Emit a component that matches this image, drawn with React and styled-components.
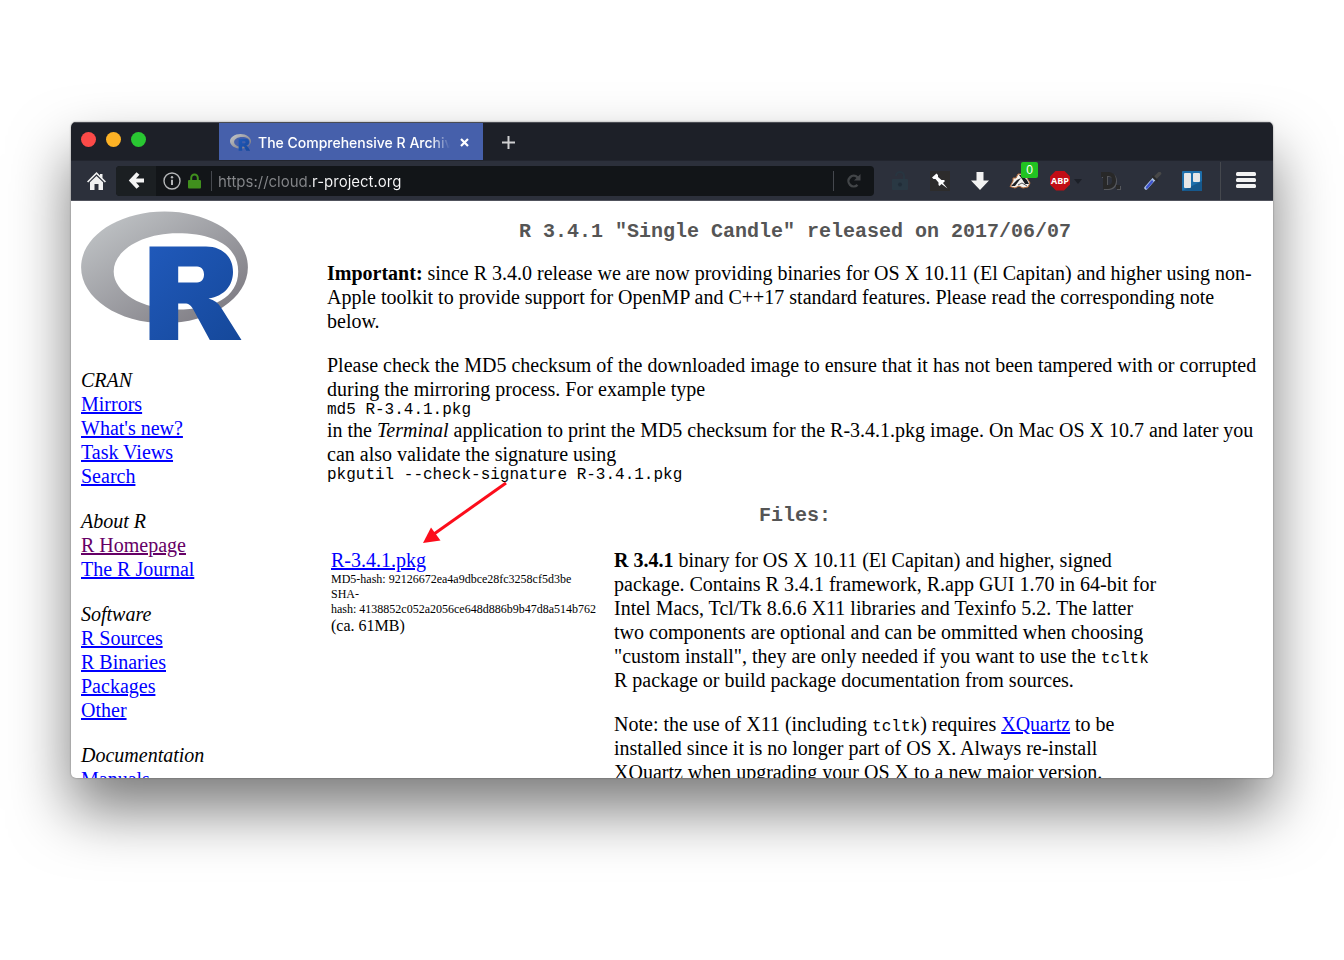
import React from 'react';
import styled, { createGlobalStyle } from 'styled-components';

const GlobalStyle = createGlobalStyle`
  * { box-sizing: border-box; }
  body {
    margin: 0;
    background: #fff;
    color: #000;
    font-family: 'Liberation Serif', serif;
    font-size: 20px;
    line-height: 24px;
  }
`;

const Desktop = styled.div`
  height: 100vh;
  padding: 122px 71px 182px;
  display: flex;
`;

const BrowserWindow = styled.div`
  flex: 1;
  min-width: 0;
  display: flex;
  flex-direction: column;
  overflow: hidden;
  background: #fff;
  border-radius: 5px;
  box-shadow: 0 32px 60px rgba(0, 0, 0, 0.52), 0 0 2px rgba(0, 0, 0, 0.4);
`;

const TitleBar = styled.header`
  flex: none;
  display: flex;
  height: 38px;
  background: #1d2028;
  border-top: 1px solid #4a4c53;
  font-family: Inter, sans-serif;
`;

const WindowButtons = styled.div`
  display: flex;
  gap: 10px;
  width: 148px;
  padding: 9px 10px;
`;

const WindowButton = styled.button`
  width: 15px;
  height: 15px;
  padding: 0;
  border: 0;
  border-radius: 50%;
  background: ${(p) => p.$color};
`;

const Tab = styled.div`
  display: flex;
  align-items: center;
  gap: 7px;
  width: 264px;
  padding: 2px 12px 0 11px;
  background: #4660ab;
  color: #fff;
`;

const TabTitle = styled.span`
  flex: 1;
  min-width: 0;
  overflow: hidden;
  white-space: nowrap;
  font-size: 14px;
  font-weight: 500;
  mask-image: linear-gradient(90deg, #000 90%, transparent);
`;

const IconButton = styled.button`
  flex: none;
  display: flex;
  align-items: center;
  justify-content: center;
  position: relative;
  width: ${(p) => p.$width || 40}px;
  height: ${(p) => p.$height || 40}px;
  padding: 0;
  border: 0;
  background: none;
`;

const Toolbar = styled.nav`
  flex: none;
  display: flex;
  align-items: center;
  height: 41px;
  padding: 0 2px 0 5px;
  background: #2c303b;
  border-top: 1px solid #22252e;
  border-bottom: 1px solid #50525c;
  font-family: Inter, sans-serif;
`;

const AddressBar = styled.form`
  flex: 1;
  min-width: 0;
  display: flex;
  align-items: center;
  height: 30px;
  margin-right: 6px;
  overflow: hidden;
  border-radius: 4px;
  background: #121518;
`;

const BackButton = styled(IconButton)`
  background: #1b1f22;
`;

const SiteInfo = styled.div`
  display: flex;
  align-items: center;
  gap: 7px;
  padding: 0 10px 0 7px;
`;

const Divider = styled.span`
  width: 1px;
  height: ${(p) => p.$height || 20}px;
  background: #45484e;
`;

const Address = styled.input`
  flex: 1;
  min-width: 0;
  height: 26px;
  margin-left: 6px;
  padding: 2px 0 0;
  border: 0;
  outline: 0;
  font-family: Inter, sans-serif;
  font-size: 15px;
  color: transparent;
  caret-color: #fff;
  background: linear-gradient(90deg, #85878a 94px, #f9f9fa 94px);
  background-clip: text;
`;

const Badge = styled.span`
  position: absolute;
  top: 1px;
  right: 2px;
  width: 17px;
  height: 16px;
  border-radius: 2px;
  background: #22c322;
  color: #fff;
  font-size: 12px;
  font-weight: 500;
  line-height: 16px;
  text-align: center;
`;

const Page = styled.div`
  flex: 1;
  min-height: 0;
  display: flex;
  overflow: hidden;
  padding: 0 10px;
`;

const Sidebar = styled.nav`
  flex: none;
  width: 246px;
  padding-top: 10px;
`;

const LogoLink = styled.a`
  display: block;
  margin-bottom: 27px;
  svg { display: block; }
`;

const LinkGroup = styled.section`
  margin-bottom: 21px;
`;

const GroupTitle = styled.em`
  display: block;
`;

const LinkList = styled.ul`
  margin: 0;
  padding: 0;
  list-style: none;
`;

const Link = styled.a`
  color: ${(p) => (p.$visited ? '#660066' : '#0000ff')};
  text-decoration: underline;
`;

const Main = styled.main`
  flex: 1;
  min-width: 0;
`;

const Heading = styled.h1`
  margin: 19px 0 17px;
  color: #555;
  font-family: 'Liberation Mono', monospace;
  font-size: 20px;
  line-height: 24px;
  text-align: center;
`;

const FilesHeading = styled(Heading)`
  margin: 21px 0 20px;
`;

const Paragraph = styled.p`
  margin: 0 0 20px;
`;

const Command = styled.code`
  display: block;
  padding-top: 2px;
  font-family: 'Liberation Mono', monospace;
  font-size: 16px;
  line-height: 15px;
`;

const Code = styled.code`
  font-family: 'Liberation Mono', monospace;
  font-size: 16px;
  line-height: 16px;
`;

const FilesTable = styled.table`
  width: 838px;
  max-width: 100%;
  table-layout: fixed;
  border-spacing: 0;
  td { padding: 0 0 0 4px; vertical-align: top; }
  td:first-child { width: 283px; }
`;

const Hash = styled.div`
  font-size: 12px;
  line-height: 15px;
  white-space: nowrap;
`;

const FileSize = styled.div`
  font-size: 16px;
  line-height: 18px;
`;

const ArrowAnchor = styled.div`
  position: relative;
`;

const Arrow = styled.svg`
  position: absolute;
  top: -2px;
  left: 96px;
`;

const groups = [
  { title: 'CRAN', links: ['Mirrors', "What's new?", 'Task Views', 'Search'] },
  { title: 'About R', links: ['R Homepage', 'The R Journal'] },
  { title: 'Software', links: ['R Sources', 'R Binaries', 'Packages', 'Other'] },
  { title: 'Documentation', links: ['Manuals'] },
];

function RLogo({ width, height, id }) {
  return (
    <svg width={width} height={height} viewBox="0 0 167 130" preserveAspectRatio="none" aria-label="R">
      <defs>
        <linearGradient id={`${id}-ring`} x1="0" y1="0" x2="1" y2="1">
          <stop offset="0" stopColor="#c6cacc" />
          <stop offset="1" stopColor="#76737b" />
        </linearGradient>
        <linearGradient id={`${id}-letter`} x1="0" y1="0" x2="1" y2="1">
          <stop offset="0" stopColor="#2059ba" />
          <stop offset="1" stopColor="#15489a" />
        </linearGradient>
      </defs>
      <path
        fill={`url(#${id}-ring)`}
        fillRule="evenodd"
        d="M83.500 .5C37.400 .5 .1 25.500 .1 56.300c0 30.900 37.300 55.900 83.400 55.900s83.400-25 83.400-55.900C166.900 25.500 129.600 .5 83.500 .5ZM96.200 22.300c35.100 0 61 11.700 61 38.100s-25.900 38.100-61 38.100-63.500-17.100-63.500-38.100 28.500-38.100 63.500-38.100Z"
      />
      <path
        fill={`url(#${id}-letter)`}
        fillRule="evenodd"
        d="M68.500 35.500h56.500c15 0 27 9 27 25.500 0 13-8 24-24.500 26.500 6 1.500 10 4.500 12.500 9L160.500 129h-31.700L112 98c-2-3.500-4-5.500-8.500-5.500H97.200V129H68.500ZM97.200 55.500V71.500H116c5 0 7-4 7-8s-2-8-7-8Z"
      />
    </svg>
  );
}

const HomeIcon = () => (
  <svg width="19" height="18" viewBox="0 0 19 18" fill="#f0f0f0">
    <path d="M9.500 0 13 3.500V2h2.500v4L19 9.500 17.800 10.500 9.500 2.300 1.200 10.500 0 9.500Z" />
    <path d="M3 10.200 9.500 3.900 16 10.200V18h-4.500v-6h-4v6H3Z" />
  </svg>
);

const BackIcon = () => (
  <svg width="17" height="17" viewBox="0 0 17 17" fill="none" stroke="#f4f4f4" strokeWidth="4">
    <path d="M10 1.500 3.500 8.500 10 15.500M4 8.500h12" />
  </svg>
);

const InfoIcon = () => (
  <svg width="18" height="18" viewBox="0 0 18 18" fill="none" stroke="#b4b6b8" strokeWidth="1.400">
    <circle cx="9" cy="9" r="8" />
    <path d="M9 7.700V13" strokeWidth="2" />
    <circle cx="9" cy="5.200" r="1.200" fill="#b4b6b8" stroke="none" />
  </svg>
);

const LockIcon = () => (
  <svg width="13" height="16" viewBox="0 0 13 16">
    <path d="M3.200 8V5a3.300 3.600 0 0 1 6.600 0v3" fill="none" stroke="#40901d" strokeWidth="2" />
    <rect y="7" width="13" height="8.500" rx="1" fill="#40901d" />
  </svg>
);

const ReloadIcon = () => (
  <svg width="16" height="16" viewBox="0 0 16 16" fill="none" stroke="#424548" strokeWidth="2.400">
    <path d="M11.500 11.800A5.300 5.300 0 1 1 11.500 4.300L12.500 5.500" />
    <path d="M14.500 1v6.500H8Z" fill="#424548" stroke="none" />
  </svg>
);

const OpenLockIcon = () => (
  <svg width="18" height="20" viewBox="0 0 18 20">
    <path d="M5 5a3.500 3.500 0 0 1 8 0v4" fill="none" stroke="#283540" strokeWidth="2" />
    <rect x="1" y="8" width="16" height="11" rx="1" fill="#293843" />
    <circle cx="9" cy="13.500" r="2" fill="#202c37" />
  </svg>
);

const PinIcon = () => (
  <svg width="20" height="20" viewBox="0 0 20 20">
    <path fill="#2d2c2c" d="M0 0h20v20H0Z" />
    <path fill="#fff" d="M6.500 2.500 8 4 8 6l3.500 3 2.500 0 1 1-2 2 4.500 5.500L11.500 13 9.500 15l-1-1 0-2.500L5.500 8 3.500 8 2 6.500Z" />
  </svg>
);

const DownloadIcon = () => (
  <svg width="18" height="18" viewBox="0 0 18 18">
    <path fill="#f2f2f2" d="M5.500 0h7v8.500H18L9 18 0 8.500h5.500Z" />
  </svg>
);

const BadgerIcon = () => (
  <svg width="22" height="17" viewBox="0 0 22 17">
    <path d="M1 14.500 4 9 4 6 7 6 9 2 13 2 18 6 21 11 19 15 14 16 10 14 6 16Z" fill="#f4f2ef" stroke="#b66d3d" />
    <path d="M2 14 8 8 12 6 9 10 6 14Z" fill="#1d1e22" />
    <path d="M10 3 13 3 18 8 20 12 16 12 13 7Z" fill="#191b20" />
    <path d="m9 13 4-2 5 3" fill="none" stroke="#55565a" />
  </svg>
);

const AbpLabel = styled.span`
  display: flex;
  align-items: center;
  justify-content: center;
  width: 20px;
  height: 20px;
  background: #c10d15;
  clip-path: polygon(30% 0, 70% 0, 100% 30%, 100% 70%, 70% 100%, 30% 100%, 0 70%, 0 30%);
  color: #fff;
  font-family: 'Open Sans', sans-serif;
  font-size: 9px;
  font-weight: 700;
`;

const Caret = styled.span`
  position: absolute;
  top: 18px;
  right: -2px;
  border: 4px solid transparent;
  border-top: 5px solid #1c1f27;
`;

const DIcon = () => (
  <svg width="22" height="20" viewBox="0 0 22 20">
    <path fill="#55575c" fillRule="evenodd" d="M2 2h7c6 0 8 4 8 8.500S14 19 9 19H4V7H2Zm6 4v9c4 0 5-1 5-4.500S12 6 8 6Z" />
    <path fill="#282828" fillRule="evenodd" d="M1 1h7c6 0 8 4 8 8.500S13 18 8 18H3V6H1Zm6 4v9c4 0 5-1 5-4.500S11 5 7 5Z" />
    <path fill="#55575c" d="M17 15h4v4h-4Z" />
    <path fill="#282828" d="M16 14h4v4h-4Z" />
  </svg>
);

const DropperIcon = () => (
  <svg width="18" height="18" viewBox="0 0 18 18" strokeLinecap="round">
    <path d="m2 16 8-9" stroke="#a9bfe6" strokeWidth="3.400" />
    <path d="m3 15.500 5-6" stroke="#3d52cc" strokeWidth="2.400" />
    <path d="m11 6 4.500-4.500" stroke="#484848" strokeWidth="3.600" />
    <path d="m9 4.500 4 4" stroke="#292929" strokeWidth="2" />
  </svg>
);

const BoardIcon = () => (
  <svg width="20" height="20" viewBox="0 0 20 20">
    <rect width="20" height="20" rx="1" fill="#1e6fab" />
    <path d="M0 20 20 10v10Z" fill="#16588c" />
    <rect x="2" y="2" width="7" height="15" rx="1" fill="#e6e6e6" />
    <rect x="11" y="2" width="7" height="9" rx="1" fill="#e6e6e6" />
  </svg>
);

const MenuIcon = () => (
  <svg width="20" height="18" viewBox="0 0 20 18" fill="#f2f2f2">
    <rect y="0" width="20" height="4" rx="1.500" />
    <rect y="6" width="20" height="4" rx="1.500" />
    <rect y="12" width="20" height="4" rx="1.500" />
  </svg>
);

const CloseIcon = () => (
  <svg width="9" height="9" viewBox="0 0 9 9" stroke="#fff" strokeWidth="2.200">
    <path d="m1 1 7 7M8 1 1 8" />
  </svg>
);

const PlusIcon = () => (
  <svg width="13" height="13" viewBox="0 0 13 13" stroke="#cfcfd1" strokeWidth="2">
    <path d="M6.500 0v13M0 6.500h13" />
  </svg>
);

export default function App() {
  return (
    <Desktop>
      <GlobalStyle />
      <BrowserWindow>
        <TitleBar>
          <WindowButtons>
            <WindowButton $color="#fc4a48" aria-label="Close window" />
            <WindowButton $color="#fdb225" aria-label="Minimize window" />
            <WindowButton $color="#29c732" aria-label="Zoom window" />
          </WindowButtons>
          <Tab>
            <RLogo width={21} height={17} id="favicon" />
            <TabTitle>The Comprehensive R Archive</TabTitle>
            <IconButton $width={14} $height={20} aria-label="Close tab"><CloseIcon /></IconButton>
          </Tab>
          <IconButton $width={50} $height={38} aria-label="New tab"><PlusIcon /></IconButton>
        </TitleBar>
        <Toolbar>
          <IconButton aria-label="Home"><HomeIcon /></IconButton>
          <AddressBar onSubmit={(e) => e.preventDefault()}>
            <BackButton type="button" aria-label="Back"><BackIcon /></BackButton>
            <SiteInfo><InfoIcon /><LockIcon /></SiteInfo>
            <Divider />
            <Address aria-label="Address" defaultValue="https://cloud.r-project.org" />
            <Divider />
            <IconButton type="button" aria-label="Reload"><ReloadIcon /></IconButton>
          </AddressBar>
          <IconButton aria-label="Security"><OpenLockIcon /></IconButton>
          <IconButton aria-label="Pin"><PinIcon /></IconButton>
          <IconButton aria-label="Downloads"><DownloadIcon /></IconButton>
          <IconButton aria-label="Tracker blocker"><BadgerIcon /><Badge>0</Badge></IconButton>
          <IconButton aria-label="Ad blocker"><AbpLabel>ABP</AbpLabel><Caret /></IconButton>
          <IconButton $width={62} aria-label="Disconnect"><DIcon /></IconButton>
          <IconButton $width={22} aria-label="Color picker"><DropperIcon /></IconButton>
          <IconButton $width={56} aria-label="Boards"><BoardIcon /></IconButton>
          <Divider $height={38} />
          <IconButton $width={50} aria-label="Menu"><MenuIcon /></IconButton>
        </Toolbar>
        <Page>
          <Sidebar>
            <LogoLink href="#home"><RLogo width={167} height={130} id="logo" /></LogoLink>
            {groups.map((group) => (
              <LinkGroup key={group.title}>
                <GroupTitle>{group.title}</GroupTitle>
                <LinkList>
                  {group.links.map((label) => (
                    <li key={label}>
                      <Link href="#page" $visited={label === 'R Homepage'}>{label}</Link>
                    </li>
                  ))}
                </LinkList>
              </LinkGroup>
            ))}
          </Sidebar>
          <Main>
            <Heading>R 3.4.1 "Single Candle" released on 2017/06/07</Heading>
            <Paragraph>
              <b>Important:</b> since R 3.4.0 release we are now providing binaries for OS X 10.11 (El Capitan)
              and higher using non-Apple toolkit to provide support for OpenMP and C++17 standard features.
              Please read the corresponding note below.
            </Paragraph>
            <div>
              Please check the MD5 checksum of the downloaded image to ensure that it has not been tampered
              with or corrupted during the mirroring process. For example type
              <Command>md5 R-3.4.1.pkg</Command>
              in the <i>Terminal</i> application to print the MD5 checksum for the R-3.4.1.pkg image. On Mac
              OS X 10.7 and later you can also validate the signature using
              <Command>pkgutil --check-signature R-3.4.1.pkg</Command>
            </div>
            <ArrowAnchor>
              <Arrow width="86" height="64" viewBox="0 0 86 64" fill="#fc0d1b">
                <path d="M83 2 11 53" stroke="#fc0d1b" strokeWidth="3" />
                <path d="M0 62 8 46.500 17.500 59.500Z" />
              </Arrow>
            </ArrowAnchor>
            <FilesHeading as="h2">Files:</FilesHeading>
            <FilesTable>
              <tbody>
                <tr>
                  <td>
                    <Link href="#pkg">R-3.4.1.pkg</Link>
                    <Hash>MD5-hash: 92126672ea4a9dbce28fc3258cf5d3be</Hash>
                    <Hash>SHA-<br />hash: 4138852c052a2056ce648d886b9b47d8a514b762</Hash>
                    <FileSize>(ca. 61MB)</FileSize>
                  </td>
                  <td>
                    <Paragraph>
                      <b>R 3.4.1</b> binary for OS X 10.11 (El Capitan) and higher, signed package. Contains R
                      3.4.1 framework, R.app GUI 1.70 in 64-bit for Intel Macs, Tcl/Tk 8.6.6 X11 libraries and
                      Texinfo 5.2. The latter two components are optional and can be ommitted when choosing
                      "custom install", they are only needed if you want to use the <Code>tcltk</Code> R package
                      or build package documentation from sources.
                    </Paragraph>
                    <Paragraph>
                      Note: the use of X11 (including <Code>tcltk</Code>) requires <Link href="#xquartz">XQuartz</Link> to
                      be installed since it is no longer part of OS X. Always re-install XQuartz when upgrading
                      your OS X to a new major version.
                    </Paragraph>
                  </td>
                </tr>
              </tbody>
            </FilesTable>
          </Main>
        </Page>
      </BrowserWindow>
    </Desktop>
  );
}
